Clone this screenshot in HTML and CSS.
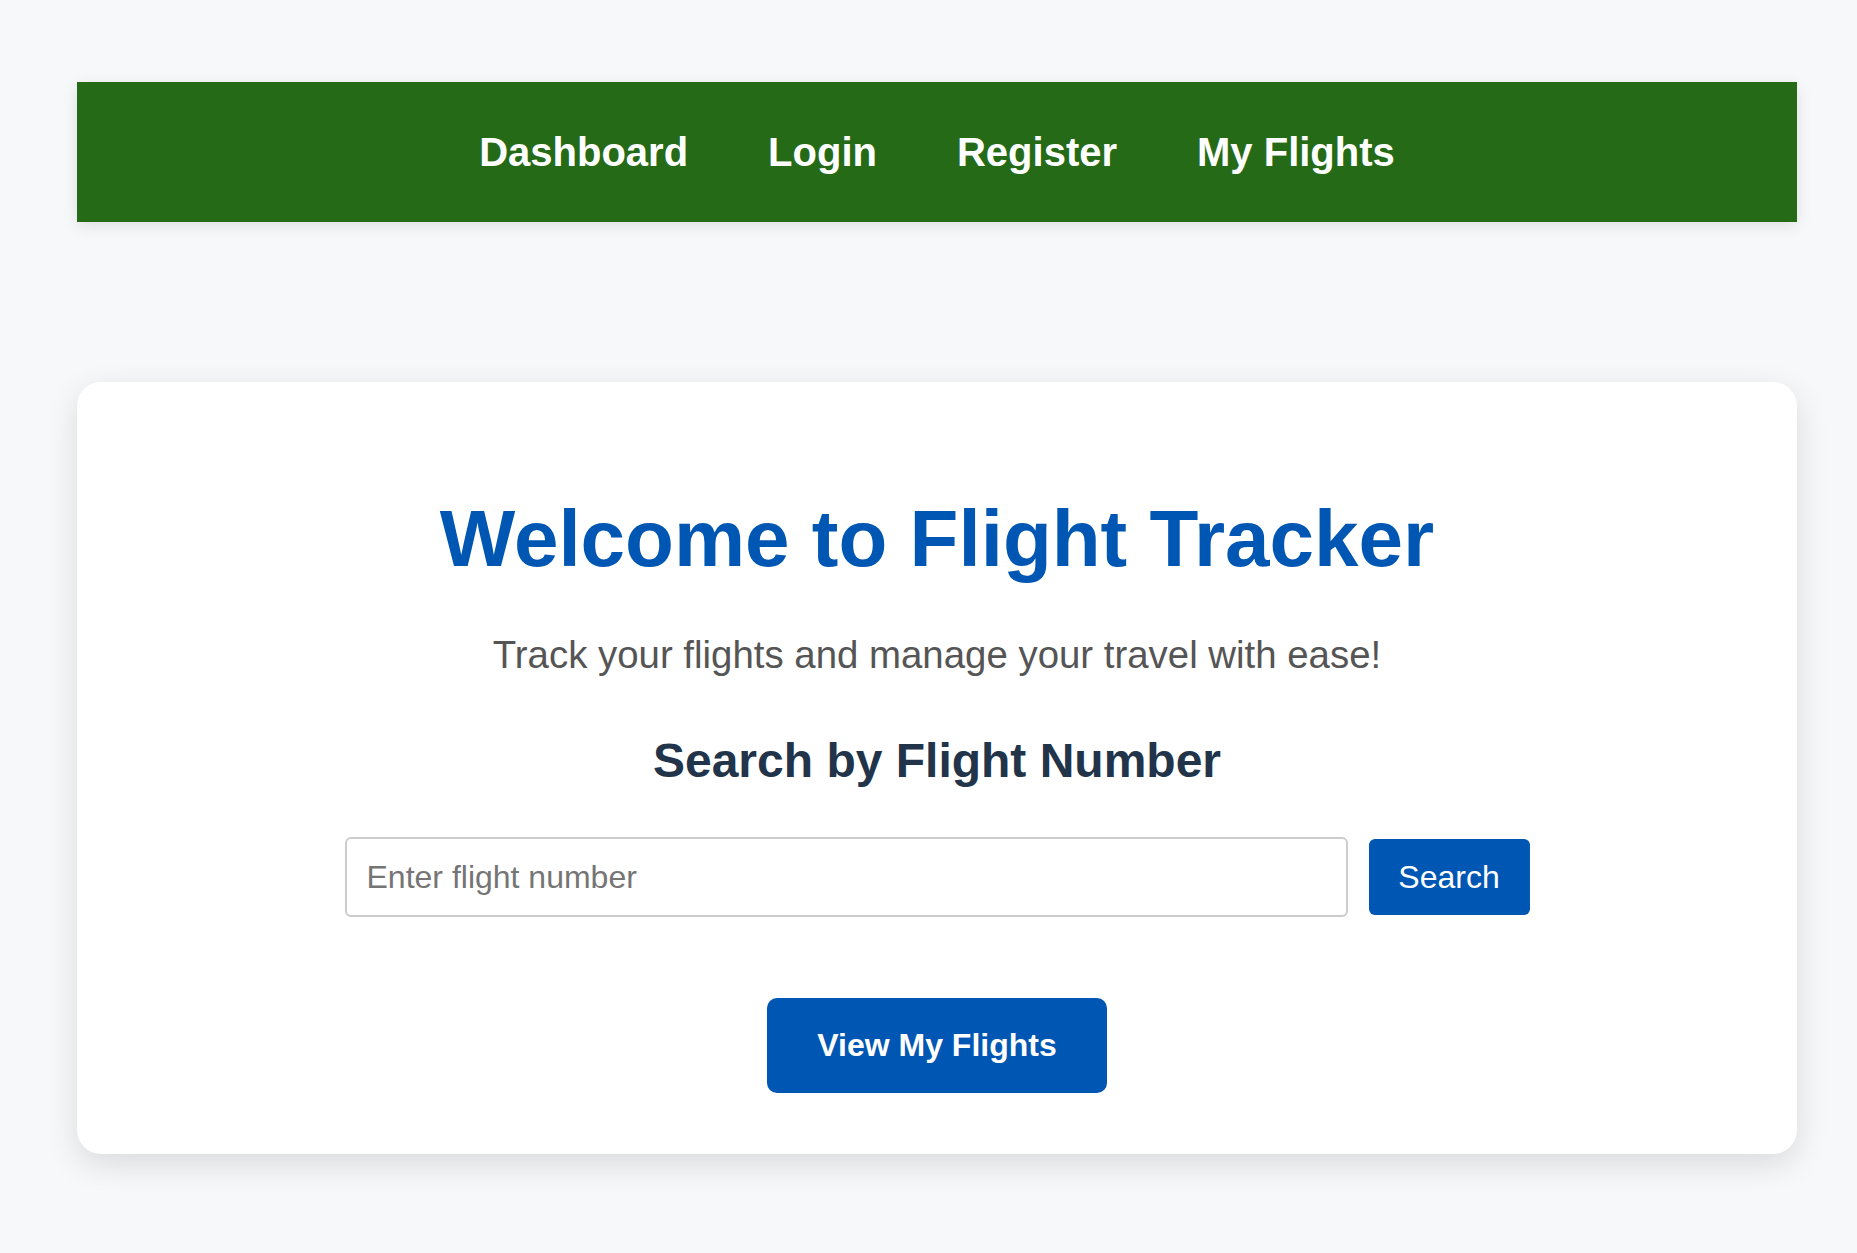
FILE: index.html
```html
<!DOCTYPE html>
<html lang="en">
<head>
<meta charset="utf-8">
<title>Flight Tracker</title>
<link rel="stylesheet" href="styles.css">
</head>
<body>
<div class="page">
  <nav class="navbar">
    <a class="nav-link" href="#">Dashboard</a>
    <a class="nav-link" href="#">Login</a>
    <a class="nav-link" href="#">Register</a>
    <a class="nav-link" href="#">My Flights</a>
  </nav>
  <main class="card">
    <h1 class="title">Welcome to Flight Tracker</h1>
    <p class="subtitle">Track your flights and manage your travel with ease!</p>
    <h2 class="section-title">Search by Flight Number</h2>
    <form class="search-form" onsubmit="return false;">
      <input class="search-input" type="text" placeholder="Enter flight number">
      <button class="search-btn" type="submit">Search</button>
    </form>
    <div class="actions">
      <a class="primary-btn" href="#">View My Flights</a>
    </div>
  </main>
</div>
</body>
</html>
```
FILE: styles.css
```css
* { box-sizing: border-box; }
html, body { margin: 0; padding: 0; }
body {
  background: #f7f8fa;
  font-family: "Liberation Sans", Arial, Helvetica, sans-serif;
}
.page {
  padding: 82px 60px 100px 77px;
  display: flex;
  flex-direction: column;
  gap: 160px;
}
.navbar {
  height: 140px;
  background: #256a17;
  display: flex;
  align-items: center;
  justify-content: center;
  gap: 80px;
  box-shadow: 0 4px 14px rgba(0,0,0,0.1);
}
.nav-link {
  color: #ffffff;
  font-weight: bold;
  font-size: 40px;
  line-height: 46px;
  text-decoration: none;
}
.card {
  background: #ffffff;
  border-radius: 24px;
  box-shadow: 0 10px 32px rgba(0,0,0,0.12);
  padding: 111px 40px 61px;
  display: flex;
  flex-direction: column;
  align-items: center;
  text-align: center;
}
.title {
  margin: 0 0 48px;
  font-size: 80px;
  line-height: 92px;
  font-weight: bold;
  color: #0056b3;
}
.subtitle {
  margin: 0 0 56px;
  font-size: 38.4px;
  line-height: 44px;
  color: #555555;
}
.section-title {
  margin: 0 0 49px;
  font-size: 48px;
  line-height: 55px;
  font-weight: bold;
  color: #21344a;
}
.search-form {
  width: 1185px;
  display: flex;
  align-items: center;
  gap: 21px;
  margin: 0 0 81px;
}
.search-input {
  flex: 1;
  height: 80px;
  border: 2px solid #cccccc;
  border-radius: 6px;
  padding: 0 20px;
  font-family: inherit;
  font-size: 32px;
  color: #333;
  background: #fff;
  outline: none;
}
.search-input::placeholder { color: #757575; }
.search-btn {
  height: 76px;
  width: 161px;
  border: none;
  border-radius: 6px;
  background: #0056b3;
  color: #ffffff;
  font-family: inherit;
  font-size: 32px;
  line-height: 36px;
  padding: 0;
  cursor: pointer;
}
.actions { display: flex; justify-content: center; }
.primary-btn {
  display: block;
  width: 340px;
  height: 95px;
  line-height: 95px;
  background: #0056b3;
  color: #ffffff;
  font-size: 32px;
  font-weight: bold;
  text-decoration: none;
  border-radius: 10px;
  text-align: center;
}
```
